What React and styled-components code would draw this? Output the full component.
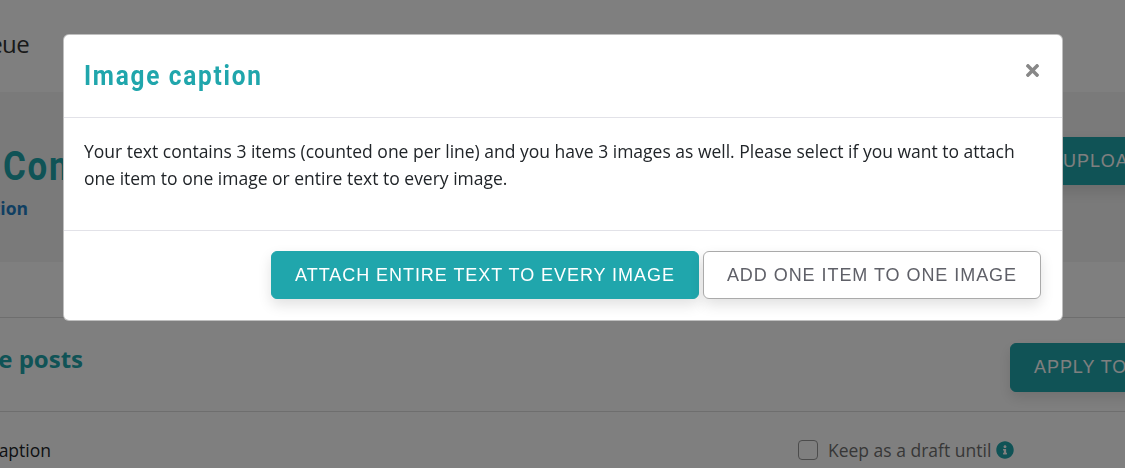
import styled, { createGlobalStyle } from "styled-components";
import { FaTimes, FaInfoCircle } from "react-icons/fa";

const GlobalStyle = createGlobalStyle`
  html, body {
    margin: 0;
    padding: 0;
    height: 100%;
    overflow: hidden;
    background: #fff;
    font-family: "Open Sans", "Liberation Sans", sans-serif;
    color: #212529;
  }
`;

// Page behind the modal, wider than the window and shifted left
const Page = styled.div`
  width: 1500px;
  margin-left: -200px;
`;

const TopBar = styled.div`
  height: 92px;
  padding: 0 0 6px 157px;
  box-sizing: border-box;
  display: flex;
  align-items: center;
  font-size: 24px;
  letter-spacing: -0.6px;
  color: #333;
`;

const Band = styled.div`
  height: 170px;
  background: #f4f4f4;
  display: grid;
  grid-template-columns: 1239px 1fr;
  padding-top: 45px;
  box-sizing: border-box;
`;

const BigTitle = styled.h1`
  margin: 5px 0 0 203px;
  font-family: Roboto, sans-serif;
  font-size: 40px;
  line-height: 50px;
  font-weight: 700;
  letter-spacing: 2px;
  color: #20a6ac;
  transform: scaleX(0.87);
  transform-origin: left center;
`;

const SubLink = styled.a`
  display: block;
  margin-top: 4px;
  font-size: 17.5px;
  font-weight: 700;
  color: #1f7fc4;
  text-align: right;
  width: 228px;
`;

const Row = styled.div`
  display: grid;
  grid-template-columns: ${({ $split }) => $split}px 1fr;
  height: ${({ $height }) => $height}px;
  box-sizing: border-box;
  border-bottom: ${({ $line }) => ($line ? "1px solid #ddd" : "none")};
`;

const SectionTitle = styled.h2`
  margin: 24px 0 0;
  font-size: 24px;
  font-weight: 700;
  color: #20a6ac;
  text-align: right;
  width: 283px;
`;

const FieldLabel = styled.span`
  display: block;
  margin-top: 26px;
  font-size: 17.5px;
  text-align: right;
  width: 251px;
  color: #212529;
`;

const Draft = styled.label`
  display: flex;
  align-items: center;
  align-self: start;
  margin-top: 26px;
  font-size: 17.5px;
  color: #6f6f6f;
`;

const CheckBox = styled.span`
  width: 20px;
  height: 20px;
  box-sizing: border-box;
  border: 1px solid #999;
  border-radius: 4px;
  margin-right: 10px;
  background: #fff;
`;

const InfoIcon = styled(FaInfoCircle)`
  width: 18px;
  height: 18px;
  margin-left: 5px;
  color: #20a6ac;
`;

const Button = styled.button`
  height: 48px;
  box-sizing: border-box;
  padding: 0 23px;
  border-radius: 6px;
  border: 1px solid ${({ $outline }) => ($outline ? "#aaa" : "#20a6ac")};
  background: ${({ $outline }) => ($outline ? "#fff" : "#20a6ac")};
  color: ${({ $outline }) => ($outline ? "#5f6068" : "#fff")};
  font-family: "Liberation Sans", sans-serif;
  font-size: 18px;
  font-weight: 400;
  letter-spacing: 0.95px;
  white-space: nowrap;
  box-shadow: 0 6px 14px rgba(0, 0, 0, 0.12);
  cursor: pointer;
`;

const PageButton = styled(Button)`
  justify-self: start;
  margin-top: ${({ $top }) => $top || 0}px;
  height: ${({ $h }) => $h || 48}px;
`;

const Backdrop = styled.div`
  position: fixed;
  inset: 0;
  background: rgba(0, 0, 0, 0.5);
  display: flex;
  justify-content: center;
  align-items: flex-start;
  padding-top: 34px;
  box-sizing: border-box;
`;

const Modal = styled.div`
  width: 1000px;
  height: 287px;
  margin-left: 1px;
  box-sizing: border-box;
  background: #fff;
  border: 1px solid rgba(0, 0, 0, 0.25);
  border-radius: 6px;
  display: flex;
  flex-direction: column;
`;

const ModalHeader = styled.div`
  height: 83px;
  box-sizing: border-box;
  flex: none;
  padding: 0 20px 2px;
  display: flex;
  align-items: center;
  justify-content: space-between;
  border-bottom: 1px solid #e2e2e8;
`;

const ModalTitle = styled.h3`
  margin: 0;
  font-family: Roboto, sans-serif;
  font-size: 28px;
  font-weight: 700;
  letter-spacing: 2px;
  color: #20a6ac;
  transform: scaleX(0.87);
  transform-origin: left center;
`;

const Close = styled.button`
  border: 0;
  padding: 0;
  background: none;
  display: flex;
  color: #888;
  margin-bottom: 10px;
  cursor: pointer;
`;

const ModalBody = styled.p`
  margin: 0;
  height: 113px;
  box-sizing: border-box;
  padding: 20px 36px 0 20px;
  font-size: 17.5px;
  line-height: 27px;
  color: #212529;
  border-bottom: 1px solid #e2e2e8;
`;

const ModalFooter = styled.div`
  flex: 1;
  padding: 20px 21px 0 0;
  display: flex;
  justify-content: flex-end;
  align-items: flex-start;
  gap: 4px;
`;

export default function App() {
  return (
    <>
      <GlobalStyle />
      <Page>
        <TopBar>Queue</TopBar>
        <Band>
          <div>
            <BigTitle>Content</BigTitle>
            <SubLink>Caption</SubLink>
          </div>
          <PageButton>UPLOAD</PageButton>
        </Band>
        <Row $split={0} $height={56} $line />
        <Row $split={1210} $height={94} $line>
          <SectionTitle>All the posts</SectionTitle>
          <PageButton $top={25} $h={49}>APPLY TO ALL</PageButton>
        </Row>
        <Row $split={998} $height={57}>
          <FieldLabel>Caption</FieldLabel>
          <Draft>
            <CheckBox />
            Keep as a draft until
            <InfoIcon />
          </Draft>
        </Row>
      </Page>
      <Backdrop>
        <Modal>
          <ModalHeader>
            <ModalTitle>Image caption</ModalTitle>
            <Close aria-label="Close"><FaTimes size={19} /></Close>
          </ModalHeader>
          <ModalBody>
            Your text contains 3 items (counted one per line) and you have 3 images as well. Please select if you want to attach one item to one image or entire text to every image.
          </ModalBody>
          <ModalFooter>
            <Button>ATTACH ENTIRE TEXT TO EVERY IMAGE</Button>
            <Button $outline>ADD ONE ITEM TO ONE IMAGE</Button>
          </ModalFooter>
        </Modal>
      </Backdrop>
    </>
  );
}
